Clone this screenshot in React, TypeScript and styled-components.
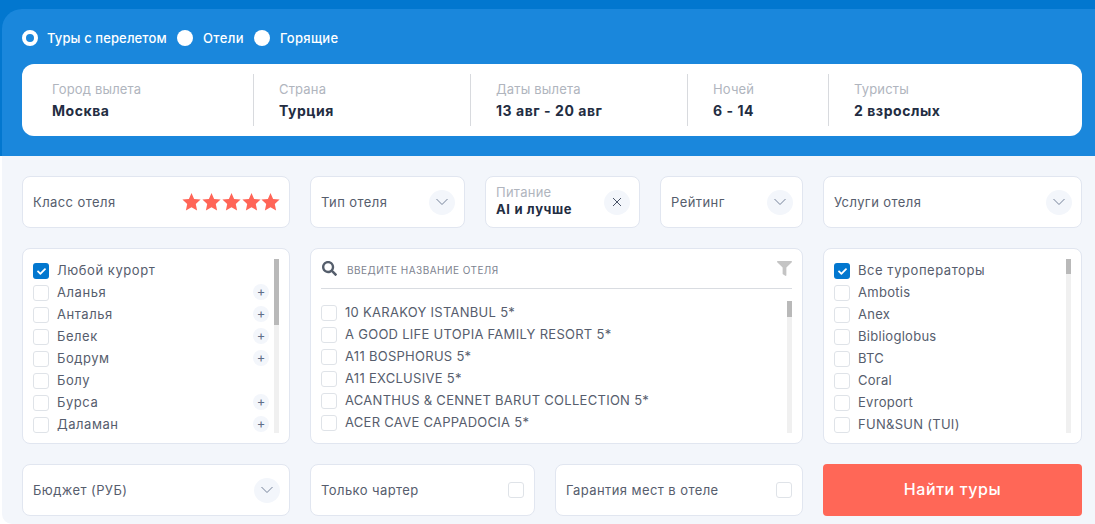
import React from "react";
import styled, { createGlobalStyle } from "styled-components";
import { FaSearch, FaFilter, FaCheck } from "react-icons/fa";

const Global = createGlobalStyle`
  html, body { margin: 0; padding: 0; background: #fff; }
  body { font-family: Inter, "Noto Sans", "Liberation Sans", sans-serif; }
  * { box-sizing: border-box; }
`;

const Page = styled.div`
  width: 1095px;
  height: 524px;
  overflow: hidden;
  padding: 9px 0 0 2px;
  background: linear-gradient(#0277cf 156px, #fff 156px);
`;
const Header = styled.header`
  width: 1113px;
  height: 147px;
  padding: 20px 31px 0 20px;
  background: #1a87dc;
  border-radius: 20px 20px 0 0;
`;
const RadioRow = styled.div`
  display: flex;
  align-items: center;
  height: 18px;
`;
const RadioDot = styled.span<{ $on?: boolean }>`
  width: 16px;
  height: 16px;
  border-radius: 50%;
  background: ${(p) => (p.$on ? "#1a87dc" : "#fff")};
  border: ${(p) => (p.$on ? "4px solid #fff" : "none")};
  flex: none;
`;
const RadioText = styled.span<{ $w: number; $ls: number; $ml: number }>`
  width: ${(p) => p.$w}px;
  margin-left: ${(p) => p.$ml}px;
  color: #fff;
  font-size: 13px;
  font-weight: 500;
  letter-spacing: ${(p) => p.$ls}px;
  white-space: nowrap;
`;
const SearchCard = styled.div`
  display: grid;
  grid-template-columns: 232px 217px 217px 141px 1fr;
  width: 1060px;
  height: 72px;
  margin-top: 17px;
  padding-top: 10px;
  background: #fff;
  border-radius: 12px;
`;
const SearchCell = styled.div<{ $first?: boolean; $last?: boolean }>`
  height: 52px;
  padding: 7px 0 0 ${(p) => (p.$first ? 30 : 25)}px;
  border-right: ${(p) => (p.$last ? "none" : "1px solid #d8dade")};
`;
const CellLabel = styled.div`
  color: #b0b5be;
  font-size: 13px;
  line-height: 16px;
  letter-spacing: 0.17px;
  white-space: nowrap;
`;
const CellValue = styled.div`
  margin-top: 5px;
  color: #232d42;
  font-size: 14px;
  font-weight: 700;
  line-height: 17px;
  letter-spacing: 0.55px;
  white-space: nowrap;
`;
const Body = styled.main`
  width: 1113px;
  height: 368px;
  padding: 20px 31px 0 20px;
  background: #f3f6fb;
  border-bottom-left-radius: 10px;
  display: flex;
  flex-direction: column;
  gap: 20px;
`;
const Row = styled.div`
  display: flex;
  gap: 20px;
`;
const Card = styled.div<{ $w: number }>`
  width: ${(p) => p.$w}px;
  height: 52px;
  padding: 0 10px 0 10px;
  display: flex;
  align-items: center;
  justify-content: space-between;
  background: #fff;
  border: 1px solid #e1e6f0;
  border-radius: 8px;
  flex: none;
`;
const CardText = styled.span`
  color: #565d6d;
  font-size: 13px;
  letter-spacing: 0.42px;
  white-space: nowrap;
`;
const Stars = styled.svg`
  width: 98px;
  height: 18px;
  margin-right: -1px;
  color: #ff6557;
  display: block;
`;
const RoundBtn = styled.span`
  width: 26px;
  height: 25px;
  margin-right: -1px;
  border-radius: 50%;
  background: #f3f6fb;
  display: flex;
  align-items: center;
  justify-content: center;
  flex: none;
  color: #76839a;
`;
const Stack = styled.div`
  display: flex;
  flex-direction: column;
  padding-bottom: 3px;
`;
const StackLabel = styled.span`
  color: #b0b5be;
  font-size: 13px;
  line-height: 17px;
  letter-spacing: 0.25px;
`;
const StackValue = styled.span`
  color: #232d42;
  font-size: 13px;
  font-weight: 700;
  line-height: 17px;
  letter-spacing: 0.65px;
  white-space: nowrap;
`;
const ListCard = styled.div<{ $w: number }>`
  width: ${(p) => p.$w}px;
  height: 196px;
  padding: 10px 10px 0 10px;
  background: #fff;
  border: 1px solid #e1e6f0;
  border-radius: 8px;
  flex: none;
`;
const HotelCard = styled(ListCard)`
  padding-top: 0;
`;
const Scroller = styled.div`
  display: flex;
  justify-content: space-between;
`;
const List = styled.div<{ $h: number }>`
  flex: 1;
  height: ${(p) => p.$h}px;
  padding-top: 1px;
  overflow: hidden;
`;
const Item = styled.div`
  height: 22px;
  display: flex;
  align-items: center;
`;
const Box = styled.span<{ $on?: boolean }>`
  width: 16px;
  height: 16px;
  border-radius: 3px;
  flex: none;
  background: ${(p) => (p.$on ? "#0277cf" : "#fff")};
  border: ${(p) => (p.$on ? "none" : "1px solid #dfe3e8")};
  display: flex;
  align-items: center;
  justify-content: center;
  color: #fff;
  font-size: 9px;
`;
const ItemText = styled.span<{ $cyr?: boolean }>`
  flex: 1;
  margin-left: 8px;
  padding-bottom: 2px;
  color: #565d6d;
  font-size: 13px;
  letter-spacing: ${(p) => (p.$cyr ? "0.55px" : "0.28px")};
  white-space: nowrap;
`;
const Plus = styled.span`
  width: 16px;
  height: 16px;
  margin: 0 5px 2px 0;
  border-radius: 50%;
  background: #f3f6fb;
  color: #5f6f88;
  font-size: 13px;
  line-height: 15px;
  text-align: center;
  flex: none;
`;
const Track = styled.div<{ $h: number }>`
  width: 5px;
  height: ${(p) => p.$h}px;
  background: #f0f0f0;
  flex: none;
`;
const Thumb = styled.div<{ $h: number }>`
  height: ${(p) => p.$h}px;
  background: #b9b9b9;
`;
const SearchBar = styled.div`
  height: 40px;
  display: flex;
  align-items: center;
  margin-bottom: 12px;
  padding-left: 1px;
  border-bottom: 1px solid #d9dce1;
  color: #555e6c;
  font-size: 15px;
`;
const SearchHint = styled.span`
  flex: 1;
  margin-left: 10px;
  padding-top: 2px;
  color: #7d8390;
  font-size: 10px;
  letter-spacing: 0.46px;
  text-transform: uppercase;
`;
const FilterIcon = styled.span`
  color: #c4c4c4;
  font-size: 15px;
  display: flex;
`;
const FindBtn = styled.button`
  width: 259px;
  height: 52px;
  padding: 0 0 3px;
  border: none;
  border-radius: 4px;
  background: #ff6757;
  color: #fff;
  font-family: inherit;
  font-size: 16px;
  font-weight: 500;
  letter-spacing: 0.6px;
  flex: none;
`;

const Chevron = () => (
  <RoundBtn>
    <svg width="14" height="8" viewBox="0 0 14 8" fill="none" stroke="currentColor" strokeWidth="1">
      <path d="M1.5 1 7 6.5 12.5 1" />
    </svg>
  </RoundBtn>
);

const resorts: [string, boolean][] = [
  ["Любой курорт", false],
  ["Аланья", true],
  ["Анталья", true],
  ["Белек", true],
  ["Бодрум", true],
  ["Болу", false],
  ["Бурса", true],
  ["Даламан", true],
];
const hotels = [
  "10 KARAKOY ISTANBUL 5*",
  "A GOOD LIFE UTOPIA FAMILY RESORT 5*",
  "A11 BOSPHORUS 5*",
  "A11 EXCLUSIVE 5*",
  "ACANTHUS & CENNET BARUT COLLECTION 5*",
  "ACER CAVE CAPPADOCIA 5*",
];
const operators = ["Все туроператоры", "Ambotis", "Anex", "Biblioglobus", "BTC", "Coral", "Evroport", "FUN&SUN (TUI)"];
const cells = [
  ["Город вылета", "Москва"],
  ["Страна", "Турция"],
  ["Даты вылета", "13 авг - 20 авг"],
  ["Ночей", "6 - 14"],
  ["Туристы", "2 взрослых"],
];
const star = "M9.5 0 12.1 5.9 18.6 6.6 13.8 11 15.1 17.4 9.5 14.2 3.9 17.4 5.2 11 0.4 6.6 6.9 5.9Z";

export default function App() {
  return (
    <Page>
      <Global />
      <Header>
        <RadioRow>
          <RadioDot $on />
          <RadioText $w={130} $ml={9} $ls={0.12}>Туры с перелетом</RadioText>
          <RadioDot />
          <RadioText $w={51} $ml={10} $ls={0.4}>Отели</RadioText>
          <RadioDot />
          <RadioText $w={70} $ml={10} $ls={0.3}>Горящие</RadioText>
        </RadioRow>
        <SearchCard>
          {cells.map(([l, v], i) => (
            <SearchCell key={l} $first={i === 0} $last={i === 4}>
              <CellLabel>{l}</CellLabel>
              <CellValue>{v}</CellValue>
            </SearchCell>
          ))}
        </SearchCard>
      </Header>
      <Body>
        <Row>
          <Card $w={268}>
            <CardText>Класс отеля</CardText>
            <Stars viewBox="0 0 98 18" fill="currentColor">
              {[0, 20, 40, 60, 79].map((x) => (
                <path key={x} d={star} transform={`translate(${x} 0)`} />
              ))}
            </Stars>
          </Card>
          <Card $w={155}>
            <CardText>Тип отеля</CardText>
            <Chevron />
          </Card>
          <Card $w={155}>
            <Stack>
              <StackLabel>Питание</StackLabel>
              <StackValue>AI и лучше</StackValue>
            </Stack>
            <RoundBtn>
              <svg width="10" height="10" viewBox="0 0 10 10" fill="none" stroke="#4a5468" strokeWidth="1">
                <path d="M1 1 9 9M9 1 1 9" />
              </svg>
            </RoundBtn>
          </Card>
          <Card $w={143}>
            <CardText>Рейтинг</CardText>
            <Chevron />
          </Card>
          <Card $w={259}>
            <CardText>Услуги отеля</CardText>
            <Chevron />
          </Card>
        </Row>
        <Row>
          <ListCard $w={268}>
            <Scroller>
              <List $h={174}>
                {resorts.map(([name, plus], i) => (
                  <Item key={name}>
                    <Box $on={i === 0}>{i === 0 && <FaCheck />}</Box>
                    <ItemText $cyr>{name}</ItemText>
                    {plus && <Plus>+</Plus>}
                  </Item>
                ))}
              </List>
              <Track $h={174}>
                <Thumb $h={66} />
              </Track>
            </Scroller>
          </ListCard>
          <HotelCard $w={493}>
            <SearchBar>
              <FaSearch />
              <SearchHint>Введите название отеля</SearchHint>
              <FilterIcon>
                <FaFilter />
              </FilterIcon>
            </SearchBar>
            <Scroller>
              <List $h={132}>
                {hotels.map((name) => (
                  <Item key={name}>
                    <Box />
                    <ItemText>{name}</ItemText>
                  </Item>
                ))}
              </List>
              <Track $h={132}>
                <Thumb $h={16} />
              </Track>
            </Scroller>
          </HotelCard>
          <ListCard $w={259}>
            <Scroller>
              <List $h={174}>
                {operators.map((name, i) => (
                  <Item key={name}>
                    <Box $on={i === 0}>{i === 0 && <FaCheck />}</Box>
                    <ItemText $cyr={i === 0}>{name}</ItemText>
                  </Item>
                ))}
              </List>
              <Track $h={174}>
                <Thumb $h={15} />
              </Track>
            </Scroller>
          </ListCard>
        </Row>
        <Row>
          <Card $w={268}>
            <CardText>Бюджет (РУБ)</CardText>
            <Chevron />
          </Card>
          <Card $w={225}>
            <CardText>Только чартер</CardText>
            <Box />
          </Card>
          <Card $w={248}>
            <CardText>Гарантия мест в отеле</CardText>
            <Box />
          </Card>
          <FindBtn>Найти туры</FindBtn>
        </Row>
      </Body>
    </Page>
  );
}
